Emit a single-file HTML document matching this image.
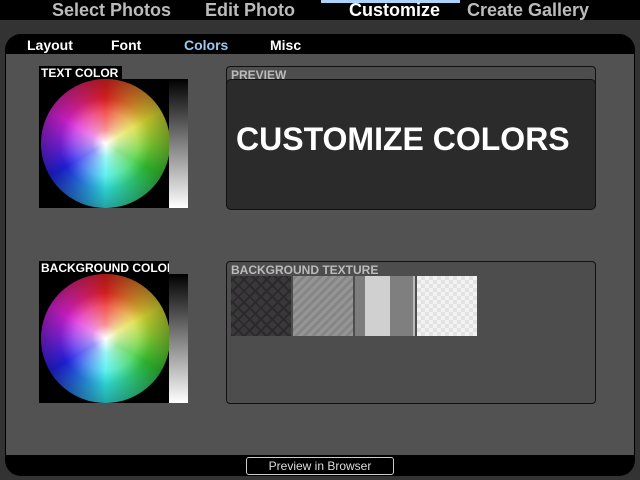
<!DOCTYPE html><html><head><style>
body{margin:0;width:640px;height:480px;background:#333;position:relative;overflow:hidden;font-family:"Liberation Sans",sans-serif;font-weight:bold}
.a{position:absolute}
.top{left:0;top:0;width:640px;height:20px;background:#000}
.tab{top:0px;font-size:18px;color:#bbb}
.panel{left:5px;top:34px;width:630px;height:442px;background:#000;border-radius:16px}
.inner{left:6px;top:54px;width:628px;height:401px;background:#525252}
.sub{top:37px;font-size:14px;color:#fff}
.lbl{background:#000;color:#fff;font-size:12px;padding:0 2px;height:14px;line-height:14px}
.wheelbox{width:130px;height:129px;background:#000;overflow:hidden}
.wheel{position:absolute;left:2px;top:0;width:129px;height:129px;border-radius:50%;background:radial-gradient(circle,#fff 0%,rgba(255,255,255,.5) 15%,rgba(255,255,255,0) 50%),conic-gradient(from 0deg,#e22,#dd3 60deg,#3c3 120deg,#3ee 180deg,#22e 240deg,#d2d 300deg,#e22 360deg)}
.shade{position:absolute;left:2px;top:0;width:129px;height:129px;border-radius:50%;background:radial-gradient(circle,rgba(0,0,0,0) 35%,rgba(0,0,0,.35) 75%,rgba(0,0,0,.75) 100%)}
.bar{width:19px;height:129px;background:linear-gradient(#000,#fff)}
.box{border:1px solid #111;border-radius:4px;background:#4d4d4d}
.bt{font-size:12px;color:#bbb}
</style></head><body>
<div class="a top"></div>
<div class="a" style="left:321px;top:0;width:139px;height:3px;background:#acd4f8"></div>
<div class="a tab" style="left:52px">Select Photos</div>
<div class="a tab" style="left:205px">Edit Photo</div>
<div class="a tab" style="left:349px;color:#fff">Customize</div>
<div class="a tab" style="left:467px">Create Gallery</div>
<div class="a panel"></div>
<div class="a inner"></div>
<div class="a sub" style="left:27px">Layout</div>
<div class="a sub" style="left:111px">Font</div>
<div class="a sub" style="left:184px;color:#9cc8f0">Colors</div>
<div class="a sub" style="left:270px">Misc</div>

<div class="a lbl" style="left:39px;top:66px;width:79px">TEXT COLOR</div>
<div class="a wheelbox" style="left:39px;top:79px"><div class="wheel"></div><div class="shade"></div></div>
<div class="a bar" style="left:169px;top:79px"></div>
<div class="a lbl" style="left:39px;top:261px;width:126px;overflow:hidden;white-space:nowrap">BACKGROUND COLOR</div>
<div class="a wheelbox" style="left:39px;top:274px"><div class="wheel"></div><div class="shade"></div></div>
<div class="a bar" style="left:169px;top:274px"></div>

<div class="a box" style="left:226px;top:66px;width:368px;height:141px"></div>
<div class="a bt" style="left:231px;top:68px">PREVIEW</div>
<div class="a" style="left:226px;top:79px;width:368px;height:129px;background:#2b2b2b;border:1px solid #111;border-radius:5px"></div>
<div class="a" style="left:236px;top:121px;font-size:32px;color:#fff">CUSTOMIZE COLORS</div>

<div class="a box" style="left:226px;top:261px;width:368px;height:141px"></div>
<div class="a bt" style="left:231px;top:263px">BACKGROUND TEXTURE</div>
<div class="a" style="left:231px;top:276px;width:60px;height:60px;background:#3a383b;background-image:repeating-linear-gradient(45deg,#2a2a2a 0 2px,transparent 2px 8px),repeating-linear-gradient(-45deg,#2a2a2a 0 2px,transparent 2px 8px)"></div>
<div class="a" style="left:293px;top:276px;width:60px;height:60px;background:repeating-linear-gradient(-45deg,#959595 0 3px,#858585 3px 6px)"></div>
<div class="a" style="left:355px;top:276px;width:60px;height:60px;background:linear-gradient(90deg,#7d7d7d 0 10px,#d0d0d0 10px 35px,#7f7f7f 35px 58px,#bbb 58px)"></div>
<div class="a" style="left:417px;top:276px;width:60px;height:60px;background:#eee;background-image:repeating-conic-gradient(#e2e2e2 0 25%,#f2f2f2 0 50%);background-size:8px 8px"></div>

<div class="a" style="left:246px;top:457px;width:146px;height:16px;border:1px solid #ccc;border-radius:3px;color:#ddd;font-weight:normal;font-size:12px;text-align:center;line-height:16px">Preview in Browser</div>
</body></html>
